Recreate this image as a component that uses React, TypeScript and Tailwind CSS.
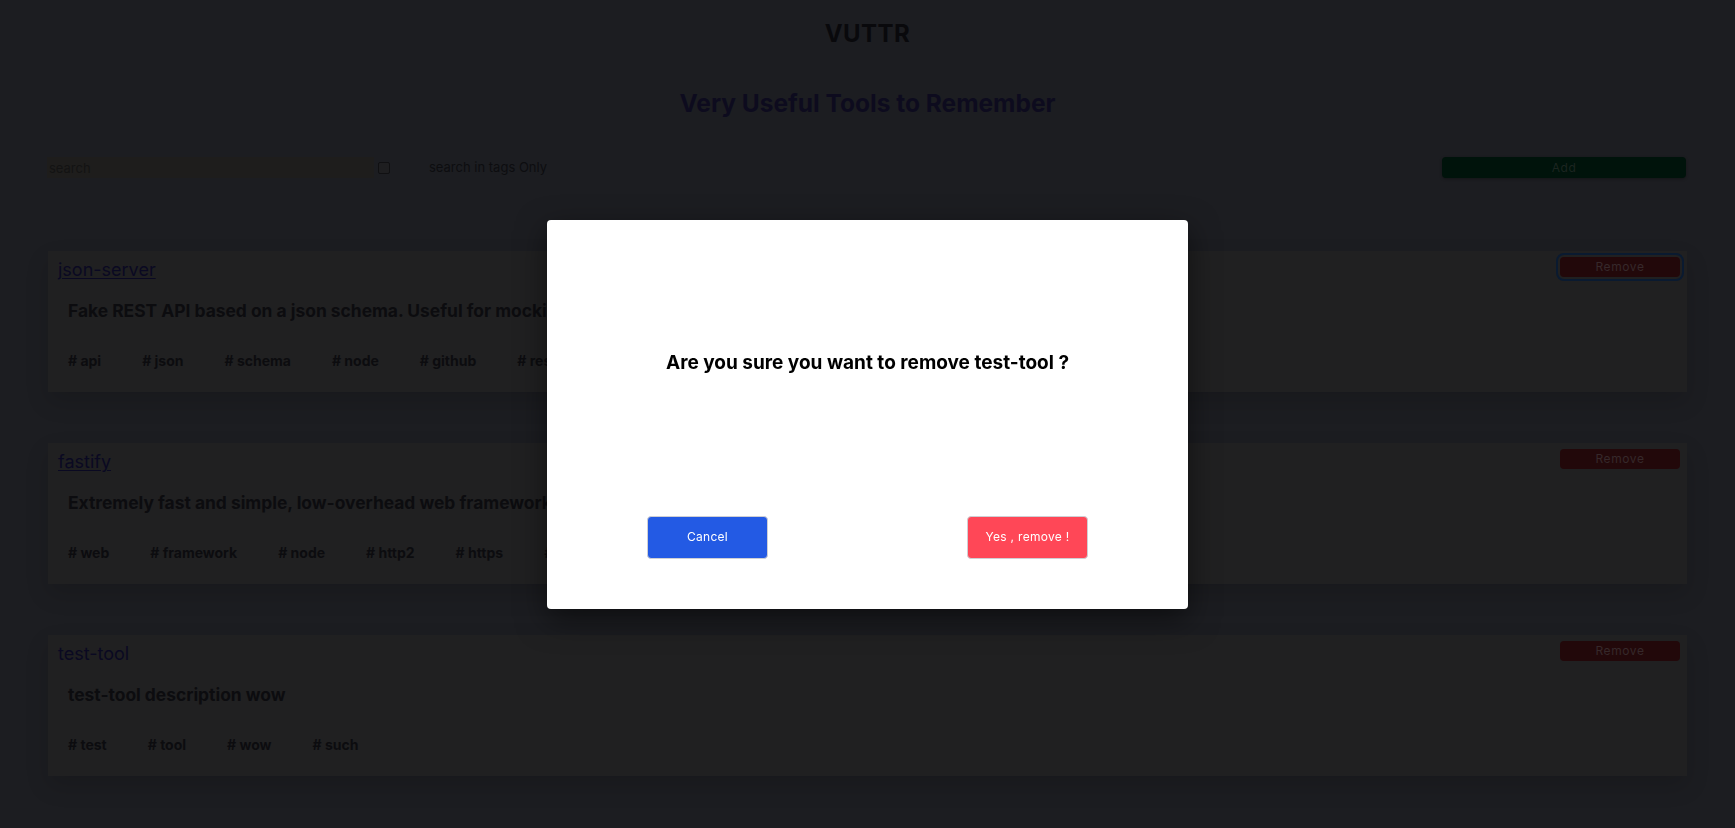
import React from "react";

type Tool = {
  title: string;
  link: boolean;
  description: string;
  tags: string[];
  focused?: boolean;
};

const tools: Tool[] = [
  {
    title: "json-server",
    link: true,
    description:
      "Fake REST API based on a json schema. Useful for mocking and creating APIs for front-end devs to consume in coding challenges.",
    tags: ["api", "json", "schema", "node", "github", "rest"],
    focused: true,
  },
  {
    title: "fastify",
    link: true,
    description:
      "Extremely fast and simple, low-overhead web framework for NodeJS. Supports HTTP2.",
    tags: ["web", "framework", "node", "http2", "https", "localhost"],
  },
  {
    title: "test-tool",
    link: false,
    description: "test-tool description wow",
    tags: ["test", "tool", "wow", "such"],
  },
];

function Card({ tool }: { tool: Tool }) {
  return (
    <div className="h-[141px] bg-[#202021] pl-[10px] pr-[7px] pt-[6px] shadow-[0_10px_22px_rgba(0,0,0,0.14)]">
      <div className="flex items-start justify-between">
        <a
          className={
            tool.link
              ? "mt-[1px] text-[18px] leading-6 text-[#0a0922] underline decoration-1 underline-offset-2"
              : "mt-[1px] text-[18px] leading-6 text-[#0a0922]"
          }
        >
          {tool.title}
        </a>
        <button
          className={
            tool.focused
              ? "h-[20px] w-[120px] rounded-[4px] bg-[#22080a] text-[12px] leading-5 tracking-[0.6px] text-[#36282a] outline-2 outline-offset-2 outline-[#0a1a30]"
              : "h-[20px] w-[120px] rounded-[4px] bg-[#22080a] text-[12px] leading-5 tracking-[0.6px] text-[#36282a]"
          }
        >
          Remove
        </button>
      </div>
      <p className="mt-[17px] whitespace-nowrap pl-[10px] text-[17.4px] font-bold leading-6 text-[#0c0c0f]">
        {tool.description}
      </p>
      <div className="mt-[28px] flex gap-[41px] pl-[10px] text-[14px] font-bold leading-5 text-[#0c0c0f]">
        {tool.tags.map((t) => (
          <span key={t}># {t}</span>
        ))}
      </div>
    </div>
  );
}

export default function App() {
  return (
    <div className="relative min-h-screen w-full bg-[#1c1d21] font-['Inter',sans-serif]">
      <div className="px-12 pb-12">
        <h1 className="pt-[18px] text-center text-[24px] font-bold leading-8 tracking-[0.02em] text-[#09090c]">
          VUTTR
        </h1>
        <h2 className="mt-[37px] text-center text-[24.5px] font-bold leading-8 text-[#0d0b1e]">
          Very Useful Tools to Remember
        </h2>
        <div className="mt-[38px] flex h-[21px] items-center">
          <input
            placeholder="search"
            className="-ml-px h-[21px] w-[327px] bg-[#1e1d1c] px-[2px] text-[13px] text-[#131313] outline-none placeholder:text-[#131313]"
          />
          <input
            type="checkbox"
            className="ml-1 h-3 w-3 appearance-none rounded-[2px] border border-[#101012] bg-[#1e1e20]"
          />
          <span className="ml-[39px] text-[13px] text-[#0d0d10]">
            search in tags Only
          </span>
          <button className="ml-auto mr-px h-[21px] w-[244px] rounded-[4px] bg-[#00130b] text-[12px] tracking-[0.5px] text-[#1c2520] shadow-[0_1px_3px_rgba(0,0,0,0.3)]">
            Add
          </button>
        </div>
        <div className="mt-[73px] flex flex-col gap-[51px]">
          {tools.map((t) => (
            <Card key={t.title} tool={t} />
          ))}
        </div>
      </div>

      <div className="fixed inset-0 flex items-center justify-center">
        <div className="flex h-[389px] w-[641px] flex-col items-center rounded-[4px] bg-white pb-[50px] pt-[131px] shadow-[0_10px_30px_rgba(0,0,0,0.5)]">
          <p className="text-[19px] font-bold leading-6 text-black">
            Are you sure you want to remove test-tool ?
          </p>
          <div className="mt-auto flex w-full justify-between px-[100px]">
            <button className="h-[43px] w-[121px] rounded-[4px] border border-[#cfcfd4] bg-[#235ae4] text-[12px] tracking-[0.3px] text-white">
              Cancel
            </button>
            <button className="h-[43px] w-[121px] rounded-[4px] border border-[#cfcfd4] bg-[#ff4757] text-[12px] tracking-[0.3px] text-white">
              Yes , remove !
            </button>
          </div>
        </div>
      </div>
    </div>
  );
}
